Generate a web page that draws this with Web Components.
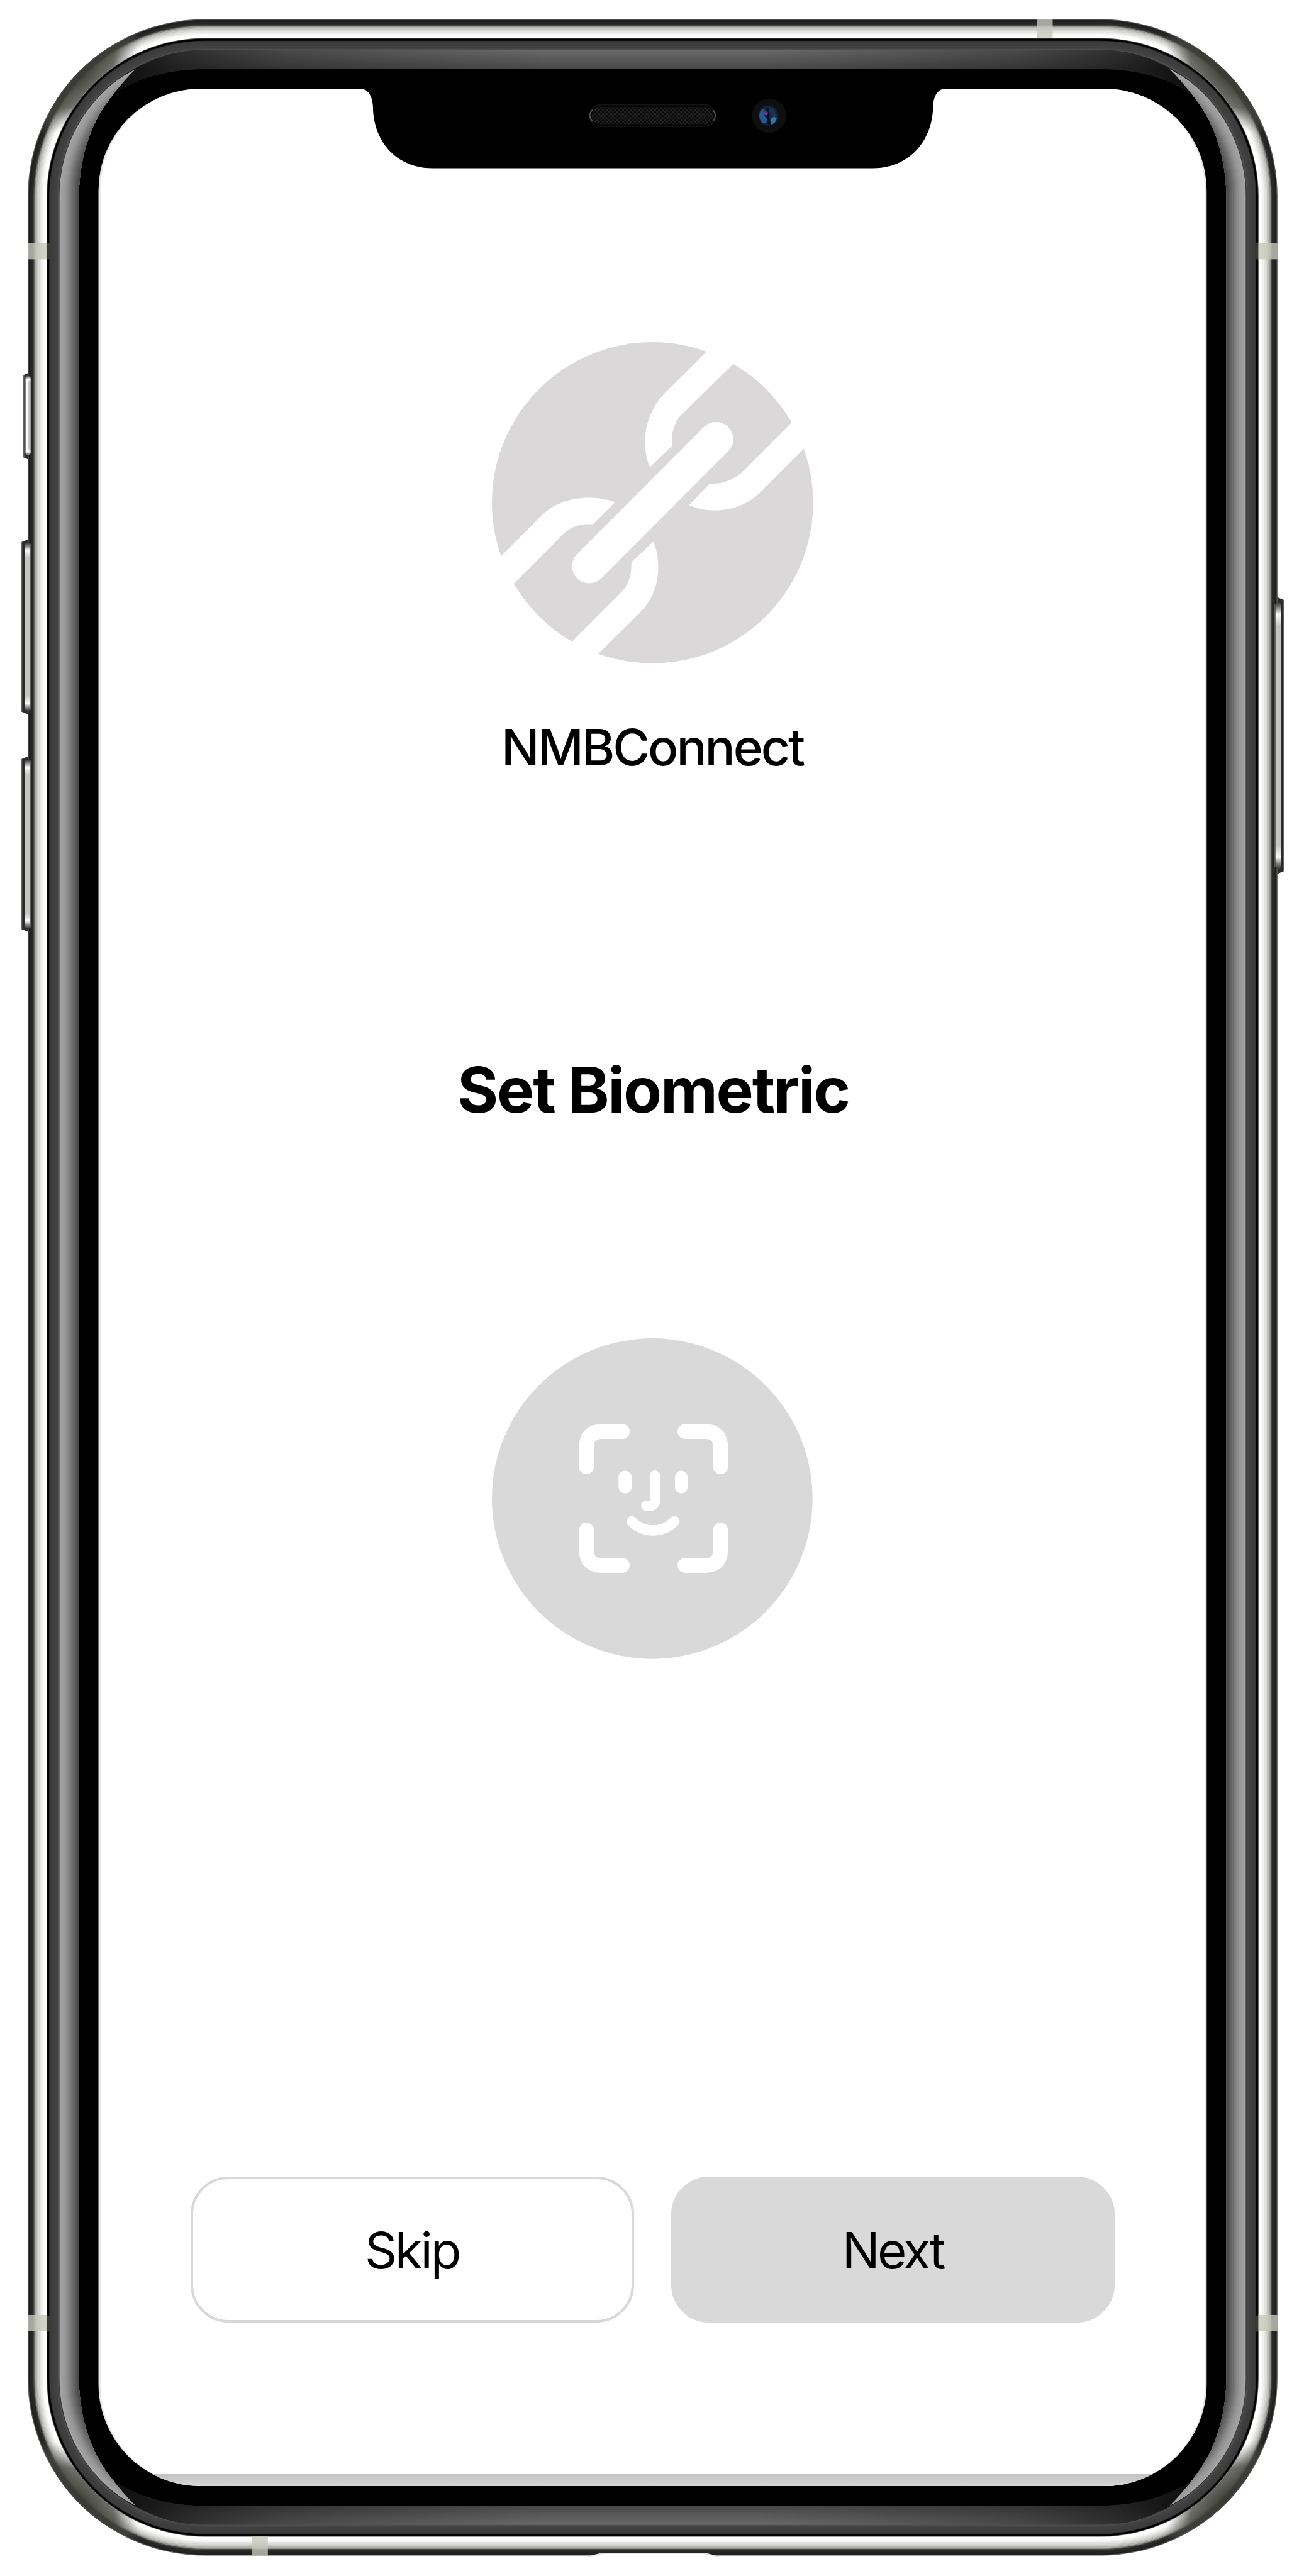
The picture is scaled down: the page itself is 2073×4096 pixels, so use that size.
<!DOCTYPE html>
<html lang="en">
<head>
<meta charset="utf-8">
<title>NMBConnect</title>
<style>
html,body{margin:0;background:#fff}
body{--u:.91013px;font-family:Inter,"Liberation Sans",sans-serif;color:#000}
</style>
</head>
<body>
<phone-device>
  <set-biometric></set-biometric>
</phone-device>
<script>
const define = (name, html, setup) => customElements.define(name, class extends HTMLElement {
  constructor() {
    super();
    const t = document.createElement('template');
    t.innerHTML = html;
    this.attachShadow({mode: 'open'}).append(t.content.cloneNode(true));
    if (setup) setup(this.shadowRoot);
  }
});

define('brand-logo', `
<style>:host{display:block;width:calc(var(--u)*561);height:calc(var(--u)*561)}svg{display:block;width:100%;height:100%}</style>
<svg viewBox="859.5 597.5 561 561">
  <circle cx="1140" cy="878" r="280.5" fill="#dad8d9"/>
  <g fill="#fff">
    <path d="M1263.5 585L1163 685C1140 708 1127 740 1127 771C1127 788 1130 803 1135.5 816L1174 779C1172 757 1178 737 1190 725L1310 607Z"/>
    <path d="M1412 709L1300 821C1284 838 1262 846 1240 845L1204 882C1218 889 1234 891.500 1249 891.500C1280 891 1308 880 1328 860L1434 754Z"/>
    <path d="M1016 1171L1117 1071C1140 1048 1150 1022 1150 990C1150 974 1147 959 1141.500 946L1103 982C1104 1002 1099 1020 1087 1033L970 1150Z"/>
    <path d="M846 1001L950 897C972 878 1000 869.500 1030 869.500C1046 869.500 1061 872 1074.500 877.500L1036 916C1016 914 1000 918 985 932L868 1049Z"/>
  </g>
  <path d="M1251 767L1029.500 989" stroke="#fff" stroke-width="60" stroke-linecap="round"/>
</svg>`);

define('face-icon', `
<style>:host{display:block;width:calc(var(--u)*560);height:calc(var(--u)*560)}svg{display:block;width:100%;height:100%}</style>
<svg viewBox="97 93 1373 1373" fill="none" stroke="#fff" stroke-linecap="round">
  <circle cx="783.5" cy="779.5" r="686.5" fill="#d9d9d9" stroke="none"/>
  <path stroke-width="64" d="M502 643V562C502 515 522 492 568 492H655M924 492H1010C1056 492 1076 516 1076 562V643M502 915V997C502 1044 522 1066 568 1066H655M924 1066H1010C1056 1066 1076 1044 1076 997V915"/>
  <g fill="#fff" stroke="none"><rect x="639" y="660" width="57" height="97" rx="28"/><rect x="881" y="660" width="54" height="97" rx="27"/></g>
  <path stroke-width="44" d="M795 681V788Q795 810 773 810H758M696 877C745 929 828 929 879 877"/>
</svg>`);

define('action-button', `
<style>
:host{flex:1;display:flex;align-items:center;justify-content:center;box-sizing:border-box;height:calc(var(--u)*255);border-radius:calc(var(--u)*66);border:calc(var(--u)*4.5) solid #d8d8d8;background:#fff;font-size:calc(var(--u)*87.5);line-height:1;letter-spacing:calc(var(--u)*-3.400);padding-top:calc(var(--u)*3)}
:host([primary]){background:#d9d9d9;border-color:#d9d9d9;letter-spacing:calc(var(--u)*-4)}
</style><slot></slot>`);

define('set-biometric', `
<style>
:host{display:flex;flex-direction:column;align-items:center;box-sizing:border-box;padding:calc(var(--u)*597.5) calc(var(--u)*331) 0 calc(var(--u)*332.500)}
.name{font-size:calc(var(--u)*88);line-height:calc(var(--u)*88);font-weight:450;margin-top:calc(var(--u)*102.500);letter-spacing:calc(var(--u)*-3.300);white-space:nowrap}
h1{font-size:calc(var(--u)*109.500);line-height:calc(var(--u)*110);font-weight:700;margin:calc(var(--u)*500.500) 0 calc(var(--u)*378.500);padding-left:calc(var(--u)*3);letter-spacing:calc(var(--u)*-2.500);white-space:nowrap}
.actions{align-self:stretch;display:flex;gap:calc(var(--u)*65);margin-top:calc(var(--u)*905)}
</style>
<brand-logo></brand-logo>
<div class="name">NMBConnect</div>
<h1>Set Biometric</h1>
<face-icon></face-icon>
<div class="actions"><action-button>Skip</action-button><action-button primary>Next</action-button></div>`);

define('phone-device', `
<style>
:host{display:grid;width:2073px;height:4096px;overflow:hidden}
:host>*,::slotted(*){grid-area:1/1}
svg{display:block;width:2073px;height:4096px}
</style>
<svg viewBox="0 0 2278 4500" preserveAspectRatio="none">
  <defs>
    <linearGradient id="topB" x1="0" x2="0" y1="87" y2="120.500" gradientUnits="userSpaceOnUse"><stop offset="0" stop-color="#6a6a6a"/><stop offset="1" stop-color="#484848"/></linearGradient>
    <linearGradient id="fade"><stop offset="0" stop-color="#080808" stop-opacity=".92"/><stop offset=".06" stop-color="#0c0c0c" stop-opacity=".65"/><stop offset=".16" stop-color="#151515" stop-opacity=".38"/><stop offset=".4" stop-color="#202020" stop-opacity="0"/><stop offset=".6" stop-color="#202020" stop-opacity="0"/><stop offset=".84" stop-color="#151515" stop-opacity=".38"/><stop offset=".94" stop-color="#0c0c0c" stop-opacity=".65"/><stop offset="1" stop-color="#080808" stop-opacity=".92"/></linearGradient>
    <radialGradient id="shade"><stop offset="0" stop-color="#3c3c37" stop-opacity=".9"/><stop offset=".55" stop-color="#45453f" stop-opacity=".78"/><stop offset="1" stop-color="#777770" stop-opacity="0"/></radialGradient>
    <linearGradient id="strip" x1="0" x2="0" y1="0" y2="1"><stop offset="0" stop-color="#c2c2c2"/><stop offset="1" stop-color="#d8d8d8"/></linearGradient>
    <linearGradient id="key" x1="0" x2="0" y1="0" y2="1"><stop offset="0" stop-color="#333"/><stop offset=".025" stop-color="#999"/><stop offset=".045" stop-color="#fafafa"/><stop offset=".09" stop-color="#c4c4c2"/><stop offset=".91" stop-color="#c4c4c2"/><stop offset=".955" stop-color="#fafafa"/><stop offset=".975" stop-color="#999"/><stop offset="1" stop-color="#333"/></linearGradient>
    <radialGradient id="lens"><stop offset="0" stop-color="#171334"/><stop offset=".6" stop-color="#1b365e"/><stop offset="1" stop-color="#0f1f38"/></radialGradient>
    <pattern id="mesh" width="7" height="7" patternUnits="userSpaceOnUse"><path d="M0 0L7 7M7 0L0 7" stroke="#2c2c2c" stroke-width="1.200"/></pattern>
    <clipPath id="ringClip"><path clip-rule="evenodd" d="M357.500 33.500H1922.700A309 309 0 0 1 2231.700 342.500V4155.300A309 309 0 0 1 1922.700 4464.300H357.500A309 309 0 0 1 48.500 4155.300V342.500A309 309 0 0 1 357.500 33.500ZM357.500 66.500A276 276 0 0 0 81.500 342.500V4155.300A276 276 0 0 0 357.500 4431.300H1922.700A276 276 0 0 0 2198.700 4155.300V342.500A276 276 0 0 0 1922.700 66.500Z"/></clipPath>
    <clipPath id="screenClip"><rect x="172" y="155" width="1936" height="4188" rx="178"/></clipPath>
    <clipPath id="sideClip">
      <path id="sb" d="M103 342V2250H137.500V342C140 260 164 205 200 162C211 149 222 135 238 120C154 162 104 245 103 342Z"/>
      <use href="#sb" transform="translate(2280.2 0) scale(-1 1)"/>
      <use href="#sb" transform="translate(0 4497.8) scale(1 -1)"/>
      <use href="#sb" transform="translate(2280.2 4497.8) scale(-1 -1)"/>
    </clipPath>
  </defs>
  <g id="keys"></g>
  <g id="metal"></g>
  <g clip-path="url(#ringClip)" id="corners"></g>
  <g id="glass"></g>
  <rect x="172" y="155" width="1936" height="4188" rx="178" fill="#e4e4e4"/>
  <rect x="175.500" y="155" width="1929.500" height="4188" rx="176" fill="#fff"/>
  <rect x="172" y="4322" width="1936" height="21" fill="url(#strip)" clip-path="url(#screenClip)"/>
  <path d="M620 150V155H629C645 155 651 172 651.500 186C652 248 693 294 756 294H1524C1587 294 1629 248 1630 186C1630.500 172 1636 155 1652 155V150Z" fill="#000"/>
  <rect x="1030" y="183" width="220" height="38" rx="19" fill="#050505" stroke="#141414" stroke-width="2"/>
  <rect x="1034" y="187" width="212" height="30" rx="15" fill="url(#mesh)"/>
  <path d="M1035 192Q1026 202 1035 212M1245 192Q1254 202 1245 212" fill="none" stroke="#555" stroke-width="2"/>
  <circle cx="1343.500" cy="202" r="30" fill="#0e0f10"/>
  <circle cx="1342" cy="202" r="17.500" fill="url(#lens)"/>
  <path d="M1329 193Q1323 203 1331 214Q1339 218 1340 207Q1332 202 1334 190Z" fill="#27598a"/>
  <path d="M1347 206Q1354 202 1357 207Q1354 217 1347 217Z" fill="#35749f"/>
  <path d="M1341 189Q1340 203 1344 217" stroke="#07101f" stroke-width="5" fill="none"/>
  <circle cx="1338" cy="198" r="3.500" fill="#5a3c88"/>
  <path d="M1020 4466C1035 4465 1045 4459.500 1055 4459.500H1228C1240 4459.500 1246 4465 1262 4466Z" fill="#e3e3e3"/>
  <path d="M1022 4467C1037 4466 1047 4461.500 1057 4461.500H1226C1238 4461.500 1244 4466 1260 4467Z" fill="#fff"/>
</svg>
<slot></slot>`, root => {
  const L = 48.5, T = 33.5, W = 2183.2, H = 4430.8, R = 309;
  const ring = (d, c) => `<rect x="${L+d}" y="${T+d}" width="${W-2*d}" height="${H-2*d}" rx="${R-d}" fill="${c}"/>`;
  // Metal edge profile, from the outer rim inward: [inset, colour].
  const stops = [[0,'#5a5a5a'],[1.5,'#202020'],[4,'#242422'],[7,'#2a2a28'],[10,'#4c4c4a'],[11.5,'#8c8c89'],[13.5,'#b2b2af'],[16,'#c8c8c5'],[18.5,'#d8d8d5'],[21,'#e5e5e2'],[23.5,'#f1f1f0'],[26,'#fbfbfa'],[29,'#fff']];
  root.getElementById('metal').innerHTML = stops.map(s => ring(...s)).join('');
  const corner = (x, y, a) => `<ellipse cx="${x}" cy="${y}" rx="128" ry="58" fill="url(#shade)" transform="rotate(${a} ${x} ${y})"/>`;
  const cx = 146, cy = 134, fx = x => 2280.2 - x, fy = y => 4497.8 - y;
  root.getElementById('corners').innerHTML = corner(cx, cy, -45) + corner(fx(cx), cy, 45) + corner(cx, fy(cy), 45) + corner(fx(cx), fy(cy), -45);
  // Side reflection: light at its outer edge, dark at the inner one.
  let side = '';
  for (let i = 0; i <= 11; i++) {
    const t = i / 11, v = Math.round(t < .3 ? 164 - t * 50 : 149 - (t - .3) * 118);
    side += ring(55.3 + i * 3, `rgb(${v},${v},${v})`);
  }
  const capPath = 'M357 87H1923C1965 87 2006 97 2042 120C2058 135 2069 149 2080 162C2038 137 1990 121 1923 120.500H357C290 121 242 137 200 162C211 149 222 135 238 120C274 97 315 87 357 87Z';
  const cap = m => `<g transform="${m}"><path d="${capPath}" fill="url(#topB)"/><path d="${capPath}" fill="url(#fade)"/></g>`;
  const band = (x, y, w, h) => `<rect x="${x}" y="${y}" width="${w}" height="${h}" fill="#c6c8bb" fill-opacity=".8"/>`;
  root.getElementById('glass').innerHTML =
    ring(33,'#555') + ring(34,'#000') + ring(37.5,'#333') + ring(39,'#3c3c3c') + ring(45,'#404040') + ring(50,'#454545') + ring(52.5,'#505050') + ring(54,'#383838') + ring(55.3,'#000') +
    `<g clip-path="url(#sideClip)">${side}</g>` +
    cap('') + cap('translate(0 4497.8) scale(1 -1)') +
    band(49,425,33.5,28) + band(49,4044,33.5,28) + band(2198,425,33.500,28) + band(2198,4044,33.500,28) +
    band(1811,34,28,33) + band(440,4431,28,33.500) +
    ['82.5 425','82.5 4045','2193 425','2193 4045'].map(p => { const [x,y] = p.split(' '); return `<rect x="${x}" y="${y}" width="5" height="28" fill="#383a32"/>`; }).join('');
  const key = (x, y, h, flip) => `<g transform="${flip ? `translate(${2*x} 0) scale(-1 1)` : ''}"><path d="M${x} ${y+5}L${x+12} ${y}H${x+20}V${y+h}H${x+12}L${x} ${y+h-5}Z" fill="#2b2b29"/><path d="M${x} ${y+5}H${x+1.5}V${y+h-5}H${x}Z" fill="#666"/></g>`;
  const face = (x, y, w, h) => `<rect x="${x}" y="${y}" width="${w}" height="${h}" rx="5" fill="url(#key)"/>`;
  root.getElementById('keys').innerHTML = key(41,650,154) + key(37.3,942,306) + key(37.3,1321,307) + key(2242.7,1043,484,true);
  root.getElementById('corners').insertAdjacentHTML('afterend',
    `<g>${face(44.5,656,9,140)}<rect x="45" y="664" width="3.500" height="124" fill="#fff"/>${face(43,948,10,294)}${face(43,1327,10,295)}${face(2228,1052,9.500,466)}<rect x="2225.800" y="1056" width="2" height="458" fill="#555"/><rect x="53" y="950" width="1.500" height="290" fill="#666"/><rect x="53" y="1329" width="1.500" height="291" fill="#666"/></g>`);
});
</script>
</body>
</html>
